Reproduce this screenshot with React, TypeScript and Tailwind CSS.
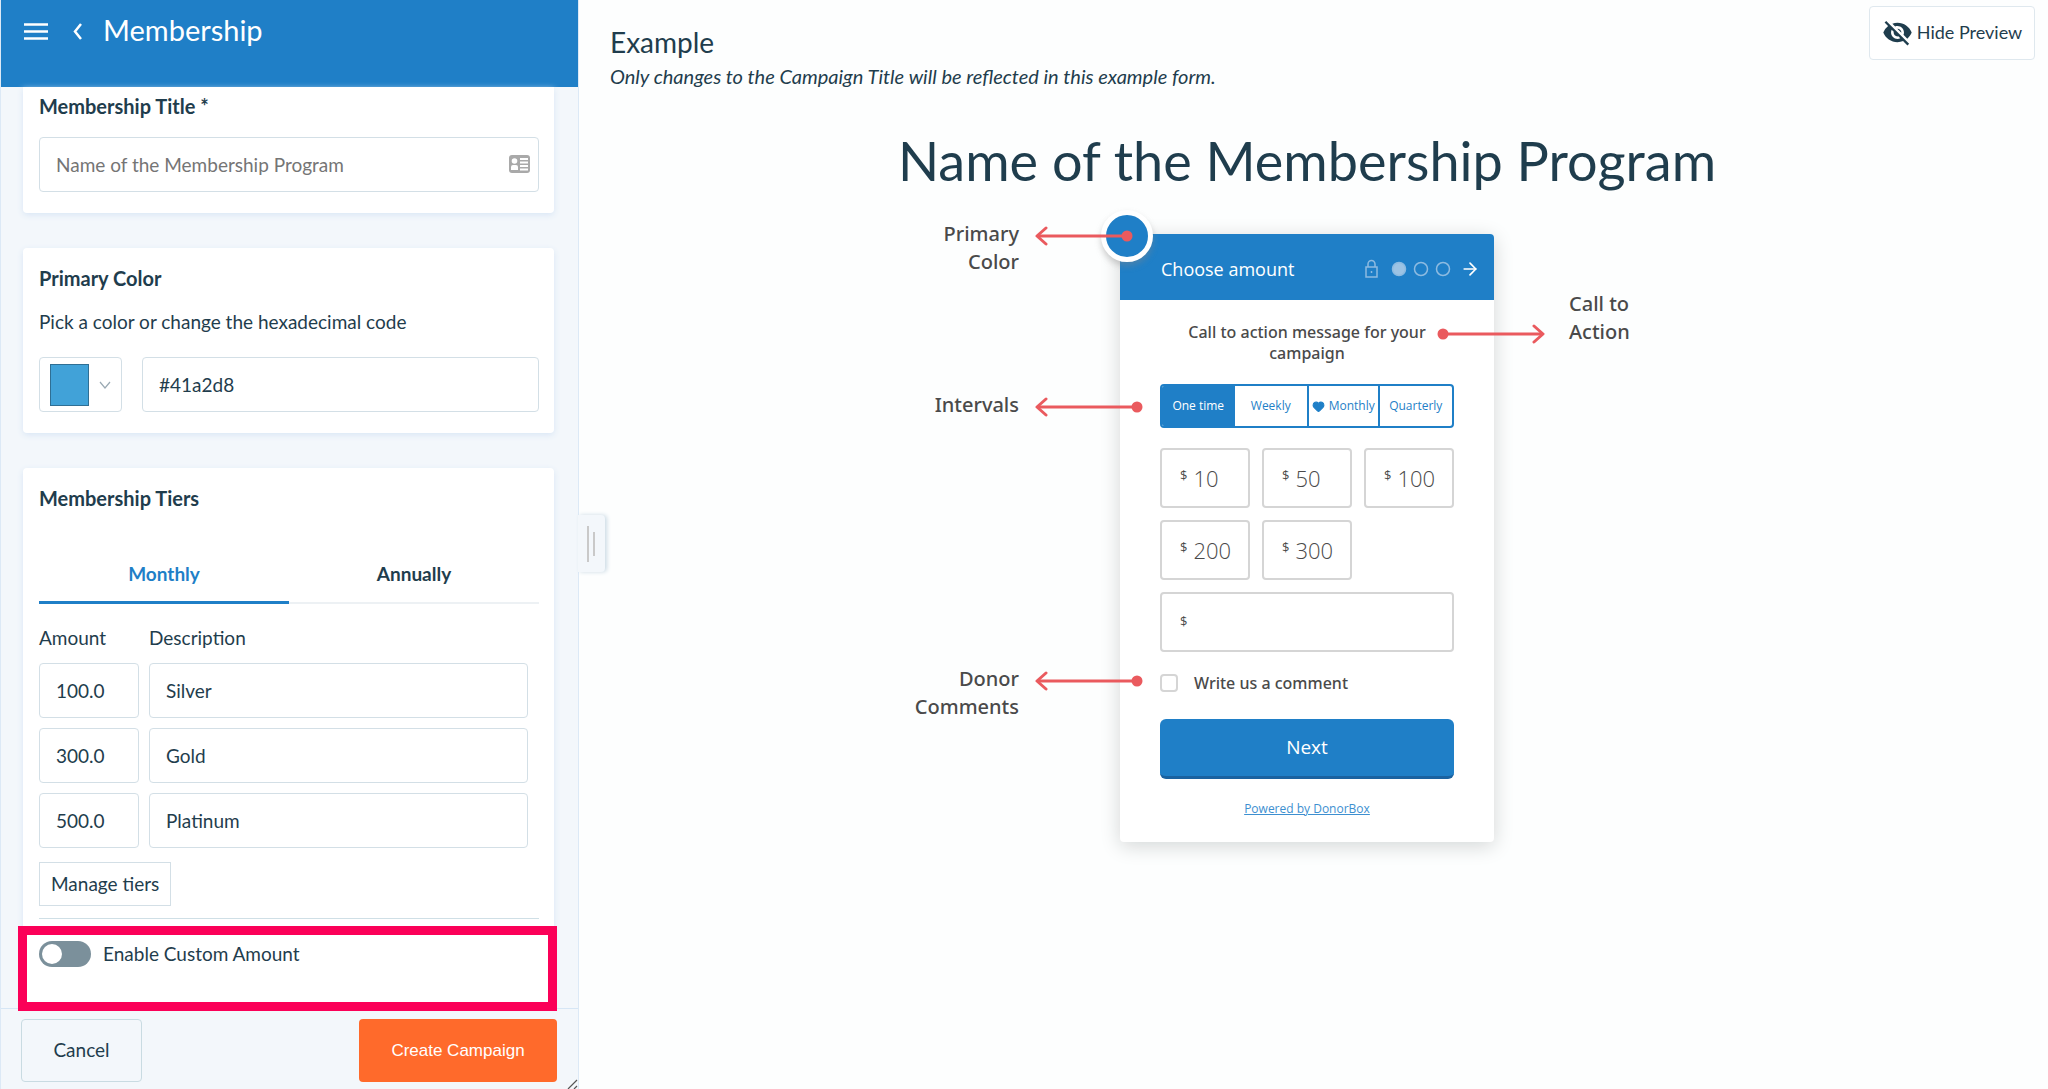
import React, { useState } from 'react';
import { ArrowRight, Heart } from 'lucide-react';
import { MdVisibilityOff } from 'react-icons/md';

interface Tier {
  amount: string;
  description: string;
}

interface CalloutProps {
  lines: string[];
  className: string;
  right?: boolean;
  length?: number;
}

const tiers: Tier[] = [
  { amount: '100.0', description: 'Silver' },
  { amount: '300.0', description: 'Gold' },
  { amount: '500.0', description: 'Platinum' },
];

const amounts = [10, 50, 100, 200, 300];

const field = 'h-[55px] rounded border border-[#d3dfe6] bg-white px-4 text-[19px] outline-none';

const Arrow: React.FC<{ length: number; right?: boolean }> = ({ length, right }) => (
  <svg width={length} height="20" className={right ? 'rotate-180' : ''}>
    <path d="M11 2 L2 10 L11 18" fill="none" stroke="#ea5a5e" strokeWidth="3" strokeLinecap="round" strokeLinejoin="round" />
    <path d={`M2 10 H${length - 6}`} stroke="#ea5a5e" strokeWidth="3" />
    <circle cx={length - 6} cy="10" r="5.5" fill="#ea5a5e" />
  </svg>
);

const Callout: React.FC<CalloutProps> = ({ lines, className, right, length = 108 }) => (
  <div className={`absolute z-10 flex items-start font-['Noto_Sans',sans-serif] text-xl leading-7 font-medium text-[#4a4a4a] ${className}`}>
    {right && <div className="mt-[34px]"><Arrow length={length} right /></div>}
    <div className={right ? 'ml-6' : 'mr-4 text-right'}>
      {lines.map((line) => (
        <div key={line} className="whitespace-nowrap">{line}</div>
      ))}
    </div>
    {!right && <div className="mt-[6px]"><Arrow length={length} /></div>}
  </div>
);

const Sidebar: React.FC = () => {
  const [tab, setTab] = useState('Monthly');
  const [custom, setCustom] = useState(false);

  return (
    <aside className="relative flex min-h-screen w-[579px] shrink-0 flex-col border-x border-[#dce9f6] bg-[#f3f7fb]">
      <header className="flex h-[87px] items-start bg-[#1f7fc7] px-[23px] pt-3 text-white">
        <button aria-label="Menu" className="mt-2">
          <svg width="24" height="22" viewBox="0 0 24 22" stroke="currentColor" strokeWidth="2.5">
            <path d="M0 4.500h24M0 11.500h24M0 18.500h24" />
          </svg>
        </button>
        <button aria-label="Back" className="mt-2 ml-6">
          <svg width="11" height="22" viewBox="0 0 11 22" fill="none" stroke="currentColor" strokeWidth="2.5">
            <path d="M9 4L3 11.500L9 19" />
          </svg>
        </button>
        <h1 className="ml-5 text-[29px] leading-9">Membership</h1>
      </header>

      <div className="flex flex-1 flex-col gap-[35px] pr-6 pl-[22px]">
        <section className="rounded-b bg-white pt-[5px] pr-[15px] pb-[21px] pl-4 shadow-[0_2px_6px_#d9e6f5]">
          <label htmlFor="title" className="block text-xl leading-7 font-bold">Membership Title *</label>
          <div className="relative mt-[17px]">
            <input id="title" placeholder="Name of the Membership Program" className={`w-full placeholder:text-[#757575] ${field}`} />
            <svg className="absolute top-[18px] right-[9px]" width="21" height="18" viewBox="0 0 21 18">
              <rect width="21" height="18" rx="3" fill="#a9a9a9" />
              <circle cx="5.5" cy="6" r="2.800" fill="#fff" />
              <path d="M2 15v-3q0-2 2-2h3q2 0 2 2v3zM11 3h8v2h-8zM11 6.500h8v2h-8zM11 10h8v2h-8zM11 13.500h8v2h-8z" fill="#fff" />
            </svg>
          </div>
        </section>

        <section className="rounded bg-white pt-4 pr-[15px] pb-[21px] pl-4 shadow-[0_2px_6px_#d9e6f5]">
          <h2 className="text-xl leading-7 font-bold">Primary Color</h2>
          <label htmlFor="hex" className="mt-4 block text-[19px] leading-7">Pick a color or change the hexadecimal code</label>
          <div className="mt-[21px] flex gap-5">
            <button aria-label="Pick a color" className="flex h-[55px] w-[83px] items-center justify-between rounded border border-[#d3dfe6] px-[10px]">
              <span className="h-[42px] w-[39px] border border-[#2f6f94] bg-[#41a2d8]" />
              <svg width="12" height="8" viewBox="0 0 12 8" fill="none" stroke="#9aa9b3" strokeWidth="1.200">
                <path d="M1 1L6 7L11 1" />
              </svg>
            </button>
            <input id="hex" defaultValue="#41a2d8" className={`min-w-0 flex-1 ${field}`} />
          </div>
        </section>

        <section className="flex-1 rounded-t bg-white pt-4 pr-[15px] pl-4 shadow-[0_2px_6px_#d9e6f5]">
          <h2 className="text-xl leading-7 font-bold">Membership Tiers</h2>
          <div className="mt-9 flex border-b-2 border-[#edf1f4]">
            {['Monthly', 'Annually'].map((name) => (
              <button
                key={name}
                onClick={() => setTab(name)}
                className={`-mb-[2px] h-[56px] flex-1 border-b-[3px] text-[19px] font-bold ${tab === name ? 'border-[#1f7fc7] text-[#1f7fc7]' : 'border-transparent'}`}
              >
                {name}
              </button>
            ))}
          </div>
          <table className="-mx-[10px] mt-[10px] w-[calc(100%+9px)] border-separate border-spacing-x-[10px] border-spacing-y-[5px]">
            <thead>
              <tr className="text-left text-[19px]">
                <th className="h-[39px] w-[100px] font-normal">Amount</th>
                <th className="font-normal">Description</th>
              </tr>
            </thead>
            <tbody>
              {tiers.map((tier) => (
                <tr key={tier.description}>
                  <td className="pb-[5px]">
                    <input aria-label="Amount" defaultValue={tier.amount} className={`block w-full ${field}`} />
                  </td>
                  <td className="pb-[5px]">
                    <input aria-label="Description" defaultValue={tier.description} className={`block w-full ${field}`} />
                  </td>
                </tr>
              ))}
            </tbody>
          </table>
          <button className="mt-1 block h-11 border border-[#d3dfe6] px-[11px] text-[19px]">Manage tiers</button>
          <div className="relative mt-3 border-t border-[#cfdfe6] pt-[21px]">
            <label className="flex items-center gap-3 text-[19px] leading-7">
              <input
                type="checkbox"
                checked={custom}
                onChange={() => setCustom(!custom)}
                className="h-[26px] w-[52px] appearance-none rounded-full bg-[#7b909b] p-[3px] before:block before:size-5 before:rounded-full before:bg-white checked:bg-[#1f7fc7] checked:before:ml-[26px]"
              />
              Enable Custom Amount
            </label>
            <div className="pointer-events-none absolute top-[7px] -right-[18px] -left-[21px] z-10 h-[85px] border-[9px] border-[#fb0058]" />
          </div>
        </section>
      </div>

      <footer className="flex h-[81px] shrink-0 items-start justify-between border-t border-[#d6e6f5] bg-[#f3f7fb] pt-[10px] pr-[21px] pl-5">
        <button className="h-[63px] w-[121px] rounded border border-[#c9dbe2] text-[19px]">Cancel</button>
        <button className="h-[63px] w-[198px] rounded bg-[#ff6a2b] font-['Liberation_Sans',sans-serif] text-[17px] text-white">Create Campaign</button>
      </footer>

      <button aria-label="Resize panel" className="absolute top-[515px] left-full flex h-[57px] w-[27px] items-center gap-1 rounded-r bg-[#f3f7fb] pl-[9px] shadow-[2px_0_4px_#ccdbe5]">
        <span className="h-9 w-[2px] bg-[#c9c9c9]" />
        <span className="h-6 w-[2px] bg-[#c9c9c9]" />
      </button>
      <svg className="absolute right-0 bottom-0" width="12" height="10" viewBox="0 0 12 10" stroke="#555" strokeWidth="1.200">
        <path d="M2 10L11 1M8 10L11 7" />
      </svg>
    </aside>
  );
};

const DonationForm: React.FC = () => (
  <div className="rounded bg-white pb-[23px] text-[#4a4a4a] shadow-[0_4px_20px_#d3d6d6]">
    <div className="flex h-[66px] items-center rounded-t bg-[#1f7fc7] pt-1 pr-[14px] pl-[41px] text-lg text-white">
      <span className="flex-1">Choose amount</span>
      <svg width="88" height="20" viewBox="0 0 88 20" fill="none" stroke="#8dbbe1" strokeWidth="1.500">
        <rect x="2" y="8" width="11" height="10" />
        <path d="M4 8V5a3.500 3.500 0 0 1 7 0v3M7.500 12v2" />
        <circle cx="35" cy="10" r="6.500" fill="#9cc3e4" />
        <circle cx="57" cy="10" r="6.500" />
        <circle cx="79" cy="10" r="6.500" />
      </svg>
      <ArrowRight size={20} className="ml-2" />
    </div>
    <div className="px-10">
      <p className="px-6 pt-[22px] text-center font-['Noto_Sans',sans-serif] text-base leading-[21px] font-medium">Call to action message for your campaign</p>
      <div className="mt-5 grid h-11 grid-cols-4 overflow-hidden rounded border-2 border-[#1f7fc7] text-xs text-[#1f7fc7]">
        <button className="bg-[#1f7fc7] text-white">One time</button>
        <button>Weekly</button>
        <button className="flex items-center justify-center gap-1 border-x-2 border-[#1f7fc7] whitespace-nowrap">
          <Heart size={13} fill="currentColor" />
          Monthly
        </button>
        <button>Quarterly</button>
      </div>
      <div className="mt-5 grid grid-cols-3 gap-3">
        {amounts.map((amount) => (
          <button key={amount} className="flex h-[60px] items-center gap-[6px] rounded border-2 border-[#d5d5d5] pl-[18px] text-[22px] font-light">
            <span className="mb-1 text-[13px] font-normal">$</span>
            {amount}
          </button>
        ))}
      </div>
      <label className="mt-3 flex h-[60px] items-center rounded border-2 border-[#d5d5d5] pl-[18px] text-[13px]">
        $
        <input aria-label="Custom amount" className="ml-2 min-w-0 flex-1 outline-none" />
      </label>
      <label className="mt-[21px] flex items-center gap-4 font-['Noto_Sans',sans-serif] text-base leading-5 font-medium">
        <input type="checkbox" className="size-[18px] appearance-none rounded border-2 border-[#d5d5d5]" />
        Write us a comment
      </label>
      <button className="mt-[26px] h-[60px] w-full rounded-md border-b-[3px] border-[#1a62a0] bg-[#1f7fc7] text-[19px] text-white">Next</button>
      <a href="#" className="mt-5 block text-center text-xs leading-5 text-[#3d8fd0] underline">Powered by DonorBox</a>
    </div>
  </div>
);

const App: React.FC = () => (
  <div className="flex min-h-screen bg-[#fdfefe] font-[Lato,sans-serif] text-[#1f3d4d]">
    <Sidebar />
    <main className="min-w-0 flex-1 pl-[31px]">
      <div className="flex items-start justify-between pt-[6px] pr-[13px]">
        <div className="pt-[18px]">
          <h2 className="text-[28px] leading-9">Example</h2>
          <p className="mt-[2px] text-xl leading-7 italic">Only changes to the Campaign Title will be reflected in this example form.</p>
        </div>
        <button className="flex h-[54px] w-[166px] items-center justify-center gap-1 rounded border border-[#dfe8ee] bg-white pb-[2px] text-lg">
          <MdVisibilityOff size={31} />
          Hide Preview
        </button>
      </div>
      <div className="pr-11">
        <h1 className="mt-[35px] text-center text-[54px] leading-[72px]">Name of the Membership Program</h1>
        <div className="relative mx-auto mt-[37px] w-[374px] font-['Open_Sans',sans-serif]">
          <DonationForm />
          <div className="absolute -top-6 -left-[19px] size-[52px] rounded-full border-[5px] border-white bg-[#1f7fc7] shadow-[0_4px_6px_#8886]" />
          <Callout lines={['Primary', 'Color']} length={98} className="-top-[14px] right-[361px]" />
          <Callout lines={['Intervals']} className="top-[157px] right-[351px]" />
          <Callout lines={['Donor', 'Comments']} className="top-[431px] right-[351px]" />
          <Callout lines={['Call to', 'Action']} className="top-[56px] left-[317px]" right />
        </div>
      </div>
    </main>
  </div>
);

export default App;
